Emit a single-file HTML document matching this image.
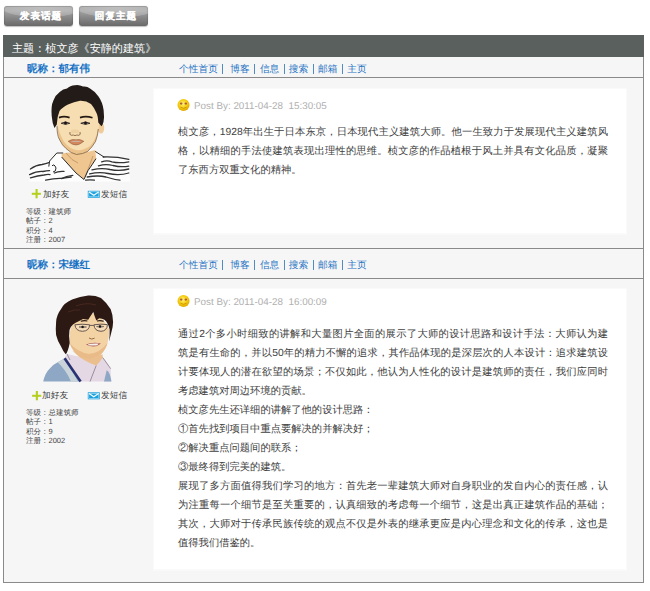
<!DOCTYPE html>
<html><head><meta charset="utf-8">
<style>
*{margin:0;padding:0;box-sizing:border-box}
html,body{width:650px;height:591px;overflow:hidden;background:#fff;font-family:"Liberation Sans",sans-serif;text-rendering:geometricPrecision}
.abs{position:absolute}
.btn{position:absolute;top:6px;width:69px;height:20px;border-radius:3px;
 background:radial-gradient(ellipse 70% 62% at 55% 5%,rgba(255,255,255,.32),rgba(255,255,255,.2) 82%,rgba(255,255,255,0) 86%),linear-gradient(#9e9e9e,#a2a2a2 25%,#8a8a8a 55%,#747474 85%,#6a6a6a);color:#fff;font-weight:bold;font-size:9.6px;
 text-align:center;line-height:20px;padding-top:1px;padding-left:5px;letter-spacing:1px;-webkit-text-stroke:0.2px #fff;box-shadow:inset 0 1px 0 rgba(0,0,0,.12),inset 1px 0 1px rgba(0,0,0,.1),inset -1px 0 1px rgba(0,0,0,.1),0 0.5px 1px rgba(0,0,0,.25)}
.box{position:absolute;left:3px;top:35px;width:641px;height:548px;border:1px solid #8a8a8a;border-top:0;background:#f6f6f6}
.hdr{position:absolute;left:3px;top:35px;width:641px;height:22px;background:#5a605e;color:#fff;font-size:11.1px;line-height:22px;padding-left:9px;padding-top:3px}
.row{position:absolute;left:4px;width:639px;background:#f6f6f6;border-bottom:1px solid #8a8a8a}
.nick{position:absolute;left:27px;color:#1672c4;font-weight:bold;font-size:10.5px}
.nw{position:absolute;color:#1f74c4;font-size:9.7px;line-height:12px;white-space:nowrap}
.ns{position:absolute;width:1px;height:10px;background:#4f8cc4}
.wbox{position:absolute;left:154px;width:472px;background:#fff;box-shadow:0 0 0 1px #fafafa,0 1px 0 1px #f9f9f9}
.pb{position:absolute;left:194px;color:#b0b0b0;font-size:9.86px;white-space:nowrap}
.txt{position:absolute;left:178px;color:#404040;font-size:10.3px;line-height:19px;white-space:nowrap}
.ln{width:430px;height:19px}
.j{text-align:justify;text-align-last:justify}
.act{position:absolute;font-size:8.7px;color:#3a3a3a;white-space:nowrap}
.info{position:absolute;left:26px;font-size:7.5px;line-height:9.3px;color:#444;white-space:nowrap}
</style></head><body>
<div class="btn" style="left:4px">发表话题</div>
<div class="btn" style="left:79px">回复主题</div>

<div class="box"></div>
<div class="hdr">主题：桢文彦《安静的建筑》</div>

<div class="row" style="top:57px;height:21px"></div>
<div class="nick" style="top:63px">昵称：郁有伟</div>
<span class="nw" style="left:179.1px;top:64px">个性首页</span><span class="nw" style="left:230.2px;top:64px">博客</span><span class="nw" style="left:259.9px;top:64px">信息</span><span class="nw" style="left:288.7px;top:64px">搜索</span><span class="nw" style="left:318.0px;top:64px">邮箱</span><span class="nw" style="left:347.2px;top:64px">主页</span><span class="ns" style="left:222.2px;top:64px"></span><span class="ns" style="left:254.0px;top:64px"></span><span class="ns" style="left:283.8px;top:64px"></span><span class="ns" style="left:313.0px;top:64px"></span><span class="ns" style="left:341.8px;top:64px"></span>

<div class="wbox" style="top:89px;height:144px"></div>
<div class="pb" style="top:101px">Post By: 2011-04-28&nbsp; 15:30:05</div>
<div class="txt" style="top:123px"><div class="ln j">桢文彦，1928年出生于日本东京，日本现代主义建筑大师。他一生致力于发展现代主义建筑风</div><div class="ln j">格，以精细的手法使建筑表现出理性的思维。桢文彦的作品植根于风土并具有文化品质，凝聚</div><div class="ln">了东西方双重文化的精神。</div></div>




<div class="act" style="left:43px;top:189px">加好友</div>
<div class="act" style="left:101px;top:189px">发短信</div>
<div class="info" style="top:207px">等级：建筑师<br>帖子：2<br>积分：4<br>注册：2007</div>

<div class="row" style="top:248px;height:31px;border-top:1px solid #8a8a8a"></div>
<div class="nick" style="top:259px">昵称：宋继红</div>
<span class="nw" style="left:179.1px;top:260px">个性首页</span><span class="nw" style="left:230.2px;top:260px">博客</span><span class="nw" style="left:259.9px;top:260px">信息</span><span class="nw" style="left:288.7px;top:260px">搜索</span><span class="nw" style="left:318.0px;top:260px">邮箱</span><span class="nw" style="left:347.2px;top:260px">主页</span><span class="ns" style="left:222.2px;top:260px"></span><span class="ns" style="left:254.0px;top:260px"></span><span class="ns" style="left:283.8px;top:260px"></span><span class="ns" style="left:313.0px;top:260px"></span><span class="ns" style="left:341.8px;top:260px"></span>

<div class="wbox" style="top:289px;height:280px"></div>
<div class="pb" style="top:297px">Post By: 2011-04-28&nbsp; 16:00:09</div>
<div class="txt" style="top:325px"><div class="ln j">通过2个多小时细致的讲解和大量图片全面的展示了大师的设计思路和设计手法：大师认为建</div><div class="ln j">筑是有生命的，并以50年的精力不懈的追求，其作品体现的是深层次的人本设计：追求建筑设</div><div class="ln j">计要体现人的潜在欲望的场景；不仅如此，他认为人性化的设计是建筑师的责任，我们应同时</div><div class="ln">考虑建筑对周边环境的贡献。</div><div class="ln">桢文彦先生还详细的讲解了他的设计思路：</div><div class="ln">①首先找到项目中重点要解决的并解决好；</div><div class="ln">②解决重点问题间的联系；</div><div class="ln">③最终得到完美的建筑。</div><div class="ln j">展现了多方面值得我们学习的地方：首先老一辈建筑大师对自身职业的发自内心的责任感，认</div><div class="ln j">为注重每一个细节是至关重要的，认真细致的考虑每一个细节，这是出真正建筑作品的基础；</div><div class="ln j">其次，大师对于传承民族传统的观点不仅是外表的继承更应是内心理念和文化的传承，这也是</div><div class="ln">值得我们借鉴的。</div></div>

<div class="act" style="left:42px;top:390px">加好友</div>
<div class="act" style="left:101px;top:390px">发短信</div>
<div class="info" style="top:408px">等级：总建筑师<br>帖子：1<br>积分：9<br>注册：2002</div>
<svg class="abs" style="left:0;top:0" width="650" height="591" viewBox="0 0 650 591">
<defs>
<radialGradient id="sm" cx="45%" cy="40%" r="60%"><stop offset="0" stop-color="#fff27a"/><stop offset="0.6" stop-color="#f4cc0c"/><stop offset="1" stop-color="#e0a800"/></radialGradient>
</defs>
<!-- smileys -->
<g id="smile1">
<circle cx="183.5" cy="105" r="6" fill="url(#sm)"/>
<ellipse cx="181.2" cy="103.6" rx="1.3" ry="1.1" fill="#b05a3a"/>
<ellipse cx="185.8" cy="103.6" rx="1.3" ry="1.1" fill="#b05a3a"/>
<path d="M180.5 107.2 Q183.5 109.5 186.5 107.2" stroke="#c88a10" stroke-width="0.8" fill="none"/>
</g>
<g transform="translate(0 196)">
<circle cx="183.5" cy="105" r="6" fill="url(#sm)"/>
<ellipse cx="181.2" cy="103.6" rx="1.3" ry="1.1" fill="#b05a3a"/>
<ellipse cx="185.8" cy="103.6" rx="1.3" ry="1.1" fill="#b05a3a"/>
<path d="M180.5 107.2 Q183.5 109.5 186.5 107.2" stroke="#c88a10" stroke-width="0.8" fill="none"/>
</g>
<!-- plus icons -->
<g id="plus1" fill="#b4cf1c">
<rect x="31.8" y="192.8" width="9.1" height="2"/>
<rect x="35.5" y="189" width="2.1" height="9.3"/>
</g>
<g transform="translate(0.3 202)" fill="#b4cf1c">
<rect x="31.8" y="192.8" width="9.1" height="2"/>
<rect x="35.5" y="189" width="2.1" height="9.3"/>
</g>
<!-- mail icons -->
<g id="mail1">
<rect x="87.8" y="190.8" width="12" height="7" fill="#1aa0dc"/>
<rect x="88.8" y="191.8" width="10" height="5" fill="none" stroke="#bfe6f8" stroke-width="0.6"/>
<path d="M89 192 L93.8 195.2 L98.6 192" stroke="#f4fbff" stroke-width="1.2" fill="none"/>
</g>
<g transform="translate(0 201.5)">
<rect x="87.8" y="190.8" width="12" height="7" fill="#1aa0dc"/>
<rect x="88.8" y="191.8" width="10" height="5" fill="none" stroke="#bfe6f8" stroke-width="0.6"/>
<path d="M89 192 L93.8 195.2 L98.6 192" stroke="#f4fbff" stroke-width="1.2" fill="none"/>
</g>

<!-- avatar 1 -->
<g>
 <path d="M29.5 181.5 L29.5 168 Q40 162 48.8 161 L56.8 153 L63.2 153 Q78 157 95.2 151.4 L104 157 Q118 157 129 159 L130 181.5 Z" fill="#fdfdfd"/>
 <g stroke="#333" stroke-width="1.3" fill="none" stroke-linecap="round">
  <path d="M30.4 169 Q36 165 42 164.5 Q46 163.5 48.8 162.6"/>
  <path d="M29.6 174.6 Q37 171 43 171.5 Q47 170.5 49.6 170.6"/>
  <path d="M30.4 177.8 Q38 175.5 44 175 Q48 174 50 174.6"/>
  <path d="M45.6 180.2 Q55 178 62 178.4 Q67 177.5 71.2 177"/>
  <path d="M54.4 173 Q58 171 64 171.4"/>
  <path d="M61.6 178.6 Q66 176 72.8 175.4"/>
  <path d="M103.2 157 Q116 156.5 128.8 159.4"/>
  <path d="M101.6 161.8 Q107 160 112 161.8 Q119 163.5 128.8 161.8"/>
  <path d="M98.4 165.8 Q106 163.5 113 165.5 Q121 167.5 128.8 166.2"/>
  <path d="M92 169.8 Q102 167.5 110 169.5 Q120 171.5 128.8 169"/>
  <path d="M89.6 173.8 Q100 171.5 108 173.5 Q119 176 128.8 173"/>
  <path d="M87.2 177 Q98 175 106 177 Q114 179.5 120 180.2"/>
  <path d="M85.6 180.2 Q90 179.5 94.4 180.2"/>
 </g>
 <path d="M61.6 154 Q68 151 76.5 154 Q88 152 95.2 150 Q96 156 96 158.6 Q92 165 88 170.6 Q86 175 84 179.4 Q80 176 76 173 Q68 164 61.6 157 Z" fill="#efc590"/>
 <path d="M66 153 Q72 161 78 163 M93 156 Q89 167 85 177" stroke="#b48a5e" stroke-width="0.7" fill="none"/>
 <path d="M63.2 153 L56.8 153 L49.6 161 L48.8 166.6 M61.6 157 L76 173 L84 179.5 M95.2 151.4 L104 157 M96 158.6 Q92 165 88 170.6 L84 179.4 M52 166 Q54 163 56 168 Q56 172 53 172" stroke="#2a2a2a" stroke-width="1" fill="none"/>
 <ellipse cx="101" cy="128" rx="3.2" ry="5.5" fill="#eecb98"/>
 <path d="M56.5 112 Q56 130 59.2 139 Q62.5 146 66 148.5 Q71 153.5 76.5 154.5 Q83 154 87.5 151.5 Q92.5 147 95.5 141.5 Q98.5 134 99 125 L98.5 110 Q90 99 78 100 Q62 101 56.5 112 Z" fill="#f6deb2"/>
 <path d="M57 124 Q57.5 136 60 140.5 Q63.5 147 67 149 Q71.5 153.5 76.5 154.5 Q83 154 87.5 151.5 Q92.5 147 95.5 141.5 Q97.5 136 98.3 128 Q96 140 90 146 Q83 151 76 150 Q68 148 63.5 141 Q59.5 134 57 124 Z" fill="#ebc28a"/>
 <path d="M57 126.2 Q57 135 59.2 139 Q62.5 146 66 148.5 Q71 153.5 76.5 154.5 Q83 154 87.5 151.5 Q92.5 147 95.5 141.5 Q98 135 98.3 129" stroke="#5a4028" stroke-width="0.6" fill="none"/>
 <path d="M51.7 116 Q50.8 106 53.4 100.5 Q55.5 95 60 91.8 Q63 89 67 88.5 Q70 85.5 75 85.3 Q79 84.5 83 86.6 Q87 86 90 88.6 Q95 91.5 98.5 96.5 Q102.5 102 103.6 110 Q104.5 117 103.5 122 Q102.5 125.5 101.4 126.2 L98.3 122.5 Q98 116 96.5 113 Q94.5 108 91 104 Q86 100.5 80 100.8 Q74 102 68 104.5 Q62 107.5 59.5 111 Q57 117 56.8 124.4 L54.5 128 Q52.2 123 51.7 116 Z" fill="#231b17"/>
 <path d="M59 117.6 Q64 115.6 69.6 117.6 M80 117.6 Q86 115.6 92.5 117.8" stroke="#261a14" stroke-width="1.7" fill="none"/>
 <path d="M61.2 123.3 Q65.5 120.6 69.8 123.3 Q65.5 125.2 61.2 123.3 Z M80.8 123.3 Q85.5 120.6 90 123.3 Q85.5 125.2 80.8 123.3 Z" fill="#efe4d0" stroke="#2a2020" stroke-width="0.9"/>
 <circle cx="65.5" cy="123" r="1.5" fill="#1a1414"/><circle cx="85.5" cy="123" r="1.5" fill="#1a1414"/>
 <path d="M70 132 Q69 135 71.5 135.3 Q73.5 134.6 75 135.6 Q76.8 134.6 78.8 135.3 Q81 135 80 132" stroke="#7a5436" stroke-width="0.8" fill="none"/><path d="M71 130 Q75 129 79 130 L78.5 133.5 Q75 132.5 71.5 133.5 Z" fill="#ecca98" opacity="0.7"/>
 <path d="M68.2 141.3 Q72 138.6 76 139.8 Q80 138.6 83.8 141.3 Q79.5 145 76 145 Q72 145 68.2 141.3 Z" fill="#d4885e" stroke="#7a4a30" stroke-width="0.5"/>
 <path d="M70.5 141.3 Q76 140.3 81.5 141.3 Q76 142.4 70.5 141.3 Z" fill="#c9c0b8"/>
</g>

<!-- avatar 2 -->
<g>
 <path d="M43.2 381.6 Q45 373 49.6 368.7 Q53 364.5 57.7 362.3 L64.5 358.5 L80.5 381.6 Z" fill="#8ea7c4"/>
 <path d="M57.7 362.3 L64.5 358.5 L78 381.6 L71 381.6 Q66 370 57.7 362.3 Z" fill="#c9d3da"/>
 <path d="M67 354 Q78 357 90 358 L102.7 357.5 Q107 362 110.7 368.7 L110.7 381.6 L81 381.6 L64.5 358 Z" fill="#e4d8e4"/>
 <path d="M106.7 370.3 Q110 372 111.5 381.6 L104 381.6 Z" fill="#8ea7c4"/>
 <path d="M72 351 Q85 356 102.7 354.5 L102.7 357.5 Q100 362 96.2 365.5 Q84 362 74.5 352.6 Z" fill="#eabf8d"/>
 <path d="M64.6 358.2 L80.6 381.6" stroke="#283272" stroke-width="2.6"/>
 <path d="M96.2 365.5 L90 381.6 M102.7 357.5 L110.7 368.7 M67 354 L70 360" stroke="#7c6c7c" stroke-width="0.7" fill="none"/>
 <path d="M72.1 325.3 Q68.9 331.8 69.7 343 Q72.1 351 80.2 357.5 Q86 359.5 91.4 359 Q97 357.5 101 354.3 Q106 349 107.5 343 Q109.5 336 109 328.6 Q100 312 88 313 Q76 316 72.1 325.3 Z" fill="#f3d2a4"/>
 <path d="M69.7 343 Q72.1 351 80.2 357.5 Q86 359.5 91.4 359 Q97 357.5 101 354.3 Q106 349 107.5 343 Q100 353 89 354 Q77 352 69.7 343 Z" fill="#e8bb88"/>
 <path d="M88.2 295.6 Q80 296.5 72.1 299.6 Q64 303 60.9 309.3 Q56.5 315 56.1 322.1 Q55.5 329 56.1 335 Q57.5 341 60.9 346.2 Q63 351 65.7 354.3 Q68 352 69.7 343 Q68.5 336 69.5 330 Q71 326 73 324.5 L75.6 322.7 Q80 320.5 83 319 L88.2 319.8 Q90.5 316 93.3 312 Q94.5 316 96.3 320.5 L99.2 318.3 Q102 318.5 104.4 319.8 Q106.5 321.5 107.4 323.5 Q109 326 109.6 329.4 Q109.8 336 109 341.4 Q110.5 336 111.5 331.8 Q113 327 113.1 322.1 Q113 315 110.7 309.3 Q106 302 101 298 Q95 295.3 88.2 295.6 Z" fill="#2c1914"/>
 <path d="M76 306 Q86 302 96 305 M68 312 Q75 309 80 310" stroke="#5a3025" stroke-width="1" fill="none" opacity="0.6"/>
 <path d="M80.8 321.3 Q84 320.3 87.4 321 M97 321 Q100.5 320.3 103.7 321.3" stroke="#2a1a14" stroke-width="1.2" fill="none"/>
 <path d="M74.9 324.8 Q82 323.6 89.6 324.8 Q89.4 331 82.5 331.3 Q75.5 331 74.9 324.8 Z M94 324.8 Q101 323.6 107.4 324.6 Q107.2 331 101 331.3 Q94.3 331 94 324.8 Z M89.6 325.4 L94 325.4" stroke="#665650" stroke-width="1" fill="#f6dcb8"/>
 <path d="M79 327 Q82.6 325.5 86.5 327 Q82.6 328.6 79 327 Z M96.5 326.6 Q100 325 103.8 326.6 Q100 328.2 96.5 326.6 Z" fill="#f8f4ee" stroke="#3a2a22" stroke-width="0.5"/>
 <circle cx="82.6" cy="326.9" r="1.2" fill="#1a1414"/><circle cx="100" cy="326.5" r="1.2" fill="#1a1414"/>
 <path d="M89 338 Q91.5 340 94.6 338.2" stroke="#8a6040" stroke-width="0.9" fill="none"/>
 <path d="M85.8 344.5 Q93 341.5 101 343.5 Q95 349 85.8 344.5 Z" fill="#b06258"/>
 <path d="M88 344.3 Q93 343 98.5 343.6 L97.5 345.3 Q93 345.8 88.5 345.2 Z" fill="#f4f0ec"/>
</g>
</svg>
</body></html>
